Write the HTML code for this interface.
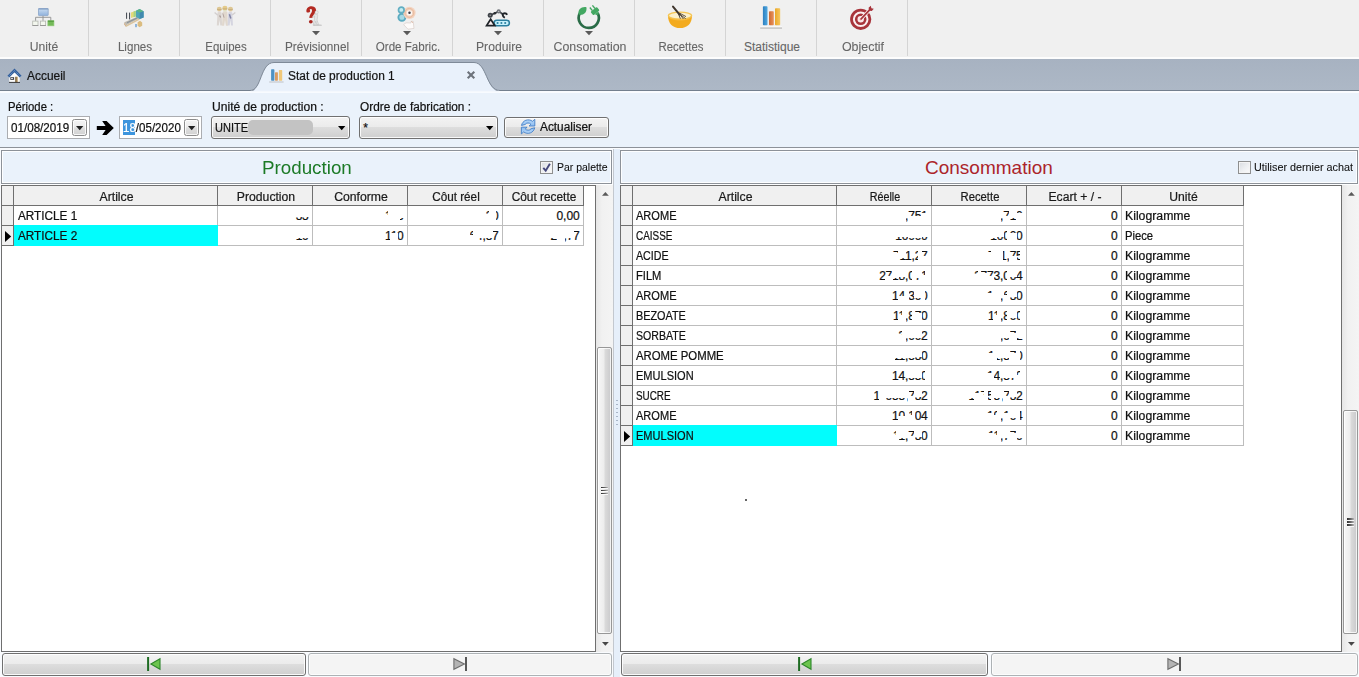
<!DOCTYPE html>
<html><head><meta charset="utf-8"><title>Stat de production</title>
<style>
html,body{margin:0;padding:0;}
body{width:1359px;height:677px;overflow:hidden;position:relative;background:#eaf2fb;font-family:"Liberation Sans",sans-serif;}
.b{position:absolute;box-sizing:border-box;}
.t{position:absolute;white-space:nowrap;-webkit-text-stroke:0.22px currentColor;}
svg{position:absolute;overflow:visible;}
.btn{position:absolute;box-sizing:border-box;border:1px solid #707070;border-radius:3px;
 background:linear-gradient(#f3f3f3 0%,#ebebeb 48%,#dddddd 50%,#cfcfcf 100%);box-shadow:inset 0 0 0 1px rgba(255,255,255,.85);}
.btnd{position:absolute;box-sizing:border-box;border:1px solid #adb2b5;border-radius:3px;background:#f4f4f4;box-shadow:inset 0 0 0 1px #fcfcfc;}
</style></head>
<body>
<div class="b" style="left:0px;top:0px;width:1359px;height:57px;background:#f0f0f0;"></div>
<div class="b" style="left:0px;top:57px;width:1359px;height:2px;background:#fdfdfd;"></div>
<div class="b" style="left:88px;top:0px;width:1px;height:56px;background:#d4d4d4;"></div>
<div class="b" style="left:179px;top:0px;width:1px;height:56px;background:#d4d4d4;"></div>
<div class="b" style="left:270px;top:0px;width:1px;height:56px;background:#d4d4d4;"></div>
<div class="b" style="left:361px;top:0px;width:1px;height:56px;background:#d4d4d4;"></div>
<div class="b" style="left:452px;top:0px;width:1px;height:56px;background:#d4d4d4;"></div>
<div class="b" style="left:543px;top:0px;width:1px;height:56px;background:#d4d4d4;"></div>
<div class="b" style="left:634px;top:0px;width:1px;height:56px;background:#d4d4d4;"></div>
<div class="b" style="left:725px;top:0px;width:1px;height:56px;background:#d4d4d4;"></div>
<div class="b" style="left:816px;top:0px;width:1px;height:56px;background:#d4d4d4;"></div>
<div class="b" style="left:907px;top:0px;width:1px;height:56px;background:#d4d4d4;"></div>
<div class="t" style="left:-16px;top:39.84px;font-size:12px;line-height:14px;color:#666;width:120px;text-align:center;transform:scaleX(1.0138);transform-origin:50% 0;-webkit-text-stroke:0.1px currentColor;">Unité</div>
<div class="t" style="left:75px;top:39.84px;font-size:12px;line-height:14px;color:#666;width:120px;text-align:center;transform:scaleX(0.9671);transform-origin:50% 0;-webkit-text-stroke:0.1px currentColor;">Lignes</div>
<div class="t" style="left:166px;top:39.84px;font-size:12px;line-height:14px;color:#666;width:120px;text-align:center;transform:scaleX(0.9546);transform-origin:50% 0;-webkit-text-stroke:0.1px currentColor;">Equipes</div>
<div class="t" style="left:257px;top:39.84px;font-size:12px;line-height:14px;color:#666;width:120px;text-align:center;transform:scaleX(0.9806);transform-origin:50% 0;-webkit-text-stroke:0.1px currentColor;">Prévisionnel</div>
<div class="t" style="left:348px;top:39.84px;font-size:12px;line-height:14px;color:#666;width:120px;text-align:center;transform:scaleX(0.9657);transform-origin:50% 0;-webkit-text-stroke:0.1px currentColor;">Orde Fabric.</div>
<div class="t" style="left:439px;top:39.84px;font-size:12px;line-height:14px;color:#666;width:120px;text-align:center;transform:scaleX(1.0141);transform-origin:50% 0;-webkit-text-stroke:0.1px currentColor;">Produire</div>
<div class="t" style="left:530px;top:39.84px;font-size:12px;line-height:14px;color:#666;width:120px;text-align:center;transform:scaleX(1.031);transform-origin:50% 0;-webkit-text-stroke:0.1px currentColor;">Consomation</div>
<div class="t" style="left:621px;top:39.84px;font-size:12px;line-height:14px;color:#666;width:120px;text-align:center;transform:scaleX(0.9503);transform-origin:50% 0;-webkit-text-stroke:0.1px currentColor;">Recettes</div>
<div class="t" style="left:712px;top:39.84px;font-size:12px;line-height:14px;color:#666;width:120px;text-align:center;-webkit-text-stroke:0.1px currentColor;">Statistique</div>
<div class="t" style="left:803px;top:39.84px;font-size:12px;line-height:14px;color:#666;width:120px;text-align:center;transform:scaleX(1.0349);transform-origin:50% 0;-webkit-text-stroke:0.1px currentColor;">Objectif</div>
<svg style="left:312px;top:30.8px" width="9" height="5" viewBox="0 0 9 5"><path d="M0 0H8L4 4.2Z" fill="#5a5a5a"/></svg>
<svg style="left:403px;top:30.8px" width="9" height="5" viewBox="0 0 9 5"><path d="M0 0H8L4 4.2Z" fill="#5a5a5a"/></svg>
<svg style="left:494px;top:30.8px" width="9" height="5" viewBox="0 0 9 5"><path d="M0 0H8L4 4.2Z" fill="#5a5a5a"/></svg>
<svg style="left:585px;top:30.8px" width="9" height="5" viewBox="0 0 9 5"><path d="M0 0H8L4 4.2Z" fill="#5a5a5a"/></svg>
<svg style="left:24px;top:0px" width="40" height="40" viewBox="0 0 40 40" ><defs><linearGradient id="gU" x1="0" y1="0" x2="0" y2="1"><stop offset="0" stop-color="#c9dcf1"/><stop offset="1" stop-color="#8fb1dc"/></linearGradient></defs><rect x="14.5" y="8.7" width="9.7" height="6.9" rx="0.7" fill="url(#gU)" stroke="#89a5c9" stroke-width="0.8"/><rect x="14.3" y="8.3" width="10.1" height="1.2" fill="#7f9bc2"/><path d="M19 15.9V20.8M11.6 20.8V17.3H26.8V20.8" fill="none" stroke="#8f8f8f" stroke-width="0.9"/><rect x="8.7" y="21.1" width="5.3" height="4.4" fill="#f3f7ee" stroke="#b4b8b0" stroke-width="0.8"/><rect x="8.4" y="25.2" width="5.9" height="0.8" fill="#8e8e8e"/><rect x="16.4" y="21.1" width="5.2" height="4.4" fill="#f3f7ee" stroke="#b4b8b0" stroke-width="0.8"/><rect x="16.1" y="25.2" width="5.8" height="0.8" fill="#8e8e8e"/><rect x="23.9" y="20.8" width="6" height="5" fill="#74ba58" stroke="#8cc874" stroke-width="0.7"/><rect x="23.9" y="20.6" width="6" height="1.1" fill="#4c9638"/></svg>
<svg style="left:114px;top:0px" width="40" height="40" viewBox="0 0 40 40" style="filter:blur(0.4px)"><g opacity="0.9"><path d="M10.3 22.3L23.8 16.4L25.6 18.2L12 25.2Z" fill="#b7b2a8"/><path d="M10.3 22.3L12 25.2L12 27L10.2 24.4Z" fill="#c9a57a"/><path d="M12 25.2L25.6 18.2V19.8L12 27Z" fill="#d8bf95"/><path d="M13 22.8L23 18" stroke="#7e8790" stroke-width="1.2"/><rect x="12" y="12.6" width="1.1" height="6.2" fill="#3a3f48"/><rect x="15" y="12.6" width="1.1" height="6.8" fill="#3a3f48"/><path d="M17 12.4L21.8 10.8V16.4L17 18Z" fill="#e3d86c"/><path d="M19.6 11.4L21.8 10.8V16.4L19.6 17.2Z" fill="#9ccf7c"/><path d="M22 10.8L25.6 9L29.6 11.2V17.4L25.6 19L22 17Z" fill="#3f9cb0"/><path d="M22 10.8L25.6 9L29.6 11.2L25.8 12.8Z" fill="#4cae7a"/><path d="M25.8 12.8L29.6 11.2V17.4L25.6 19Z" fill="#2f7fa8"/><path d="M23.6 22.2L26 20.8L28.2 22.4V25.8L25.6 27.2L23.6 25.8Z" fill="#d9b774"/><rect x="21.2" y="24" width="1.6" height="3.2" fill="#6f9fd0"/></g></svg>
<svg style="left:205px;top:0px" width="40" height="40" viewBox="0 0 40 40" style="filter:blur(0.5px)"><g opacity="0.88"><path d="M12.4 13C12.6 11.8 16.4 11.8 16.6 13L16.8 18.6L17.2 25.5H15.3L14.6 20L13.8 25.5H11.8L12.2 18.6Z" fill="#dad3ce"/><path d="M17.6 12.2C17.8 10.8 22.2 10.8 22.4 12.2L22.6 18.6L23 25.7H20.9L20 20L19.1 25.7H17L17.4 18.6Z" fill="#e0d5c9"/><path d="M23.2 13C23.4 11.8 27.2 11.8 27.4 13L27.6 18.6L28 25.5H26.1L25.4 20L24.6 25.5H22.6L23 18.6Z" fill="#d2d2de"/><path d="M9.6 12.4L12.8 15.2M30.4 12.4L27.2 15" stroke="#cfcaca" stroke-width="1.3"/><path d="M24.4 14.2L25.8 18.6" stroke="#70739a" stroke-width="1.5"/><path d="M14.6 15.4L15.6 17.6" stroke="#94847f" stroke-width="1.1"/><path d="M17.8 13.4L19 17.6" stroke="#a99a96" stroke-width="1"/><ellipse cx="14.3" cy="10.8" rx="1.7" ry="1.4" fill="#e6d9cc"/><ellipse cx="19.9" cy="10.2" rx="1.8" ry="1.5" fill="#dfe0c4"/><ellipse cx="25.5" cy="10.8" rx="1.7" ry="1.4" fill="#e6d9cc"/><ellipse cx="14.3" cy="8.9" rx="2.5" ry="2.1" fill="#dcc288"/><ellipse cx="19.9" cy="8" rx="2.6" ry="2.2" fill="#e3c57c"/><ellipse cx="25.5" cy="8.9" rx="2.5" ry="2.1" fill="#dcc288"/><path d="M12 9.7H16.6M17.4 8.9H22.4M23.2 9.7H27.8" stroke="#b99c62" stroke-width="0.8"/></g></svg>
<svg style="left:296px;top:0px" width="40" height="40" viewBox="0 0 40 40" style="filter:blur(0.3px)"><ellipse cx="21.4" cy="25.2" rx="4.6" ry="0.9" fill="#cdcdcd"/><path d="M10.4 11.4C10 7.6 13.4 6 15.8 6.2C19 6.4 20.4 8.6 20 10.8C19.6 13.2 16.8 14.6 16.4 17.8L13.4 18C13.2 14.6 16.2 12.6 16 10.4C15.8 8.8 14.2 8.8 13.6 9.8C14.6 10.6 14.2 12.6 12.4 12.6C11.2 12.6 10.5 12.2 10.4 11.4Z" fill="#b32a22"/><ellipse cx="14.8" cy="21.8" rx="1.9" ry="1.8" fill="#a8261f"/><path d="M19.8 14C21.4 13.6 22 15 21.6 16.6L21 20L22.6 24.6H20.8L19.8 21.2L18.8 24.8H17.2L18.4 19.6L18.6 16L17.2 17.2L16.6 16.4L18.8 14.4Z" fill="#e6e6e6" stroke="#b9b9b9" stroke-width="0.5"/><circle cx="20.6" cy="12.3" r="1.6" fill="#ededed" stroke="#bcbcbc" stroke-width="0.5"/></svg>
<svg style="left:387px;top:0px" width="40" height="40" viewBox="0 0 40 40" style="filter:blur(0.3px)"><circle cx="14.9" cy="17.3" r="3.5" fill="#a5d9e5" stroke="#5aaac0" stroke-width="1.9"/><circle cx="22.4" cy="12.9" r="6.2" fill="#f3d3bf"/><circle cx="22.4" cy="12.9" r="4.4" fill="none" stroke="#e8b99c" stroke-width="1"/><circle cx="22.4" cy="12.9" r="2.7" fill="#fdf8f5"/><circle cx="22.5" cy="12.8" r="1.25" fill="#3b3b45"/><circle cx="14.3" cy="9.9" r="2.8" fill="#c4ecf1" stroke="#62aec2" stroke-width="1.7"/><path d="M16.6 24.6L19 22.8L23.8 23L24 21.4L26.2 21.2L27 28.4L21 29.2Z" fill="#fdfbfa" stroke="#d8cdc8" stroke-width="0.7"/><path d="M24.4 21.6L25.8 22.6" stroke="#d9a78c" stroke-width="0.9"/></svg>
<svg style="left:478px;top:0px" width="40" height="40" viewBox="0 0 40 40" ><rect x="16" y="20.2" width="15.4" height="5.6" rx="2.8" fill="#c6f0fb" stroke="#2b7fa0" stroke-width="1.6"/><circle cx="19.6" cy="23" r="1.05" fill="#2b7fa0"/><circle cx="23.4" cy="23" r="1.05" fill="#2b7fa0"/><circle cx="27.2" cy="23" r="1.05" fill="#2b7fa0"/><path d="M12.7 19.2L16.8 25.6H8.6Z" fill="#fbeef0" stroke="#1f2328" stroke-width="1.7" stroke-linejoin="miter"/><path d="M12.2 15.2L20.7 11.4L25 14.2" fill="none" stroke="#3a3e44" stroke-width="1.7"/><circle cx="12.2" cy="15.2" r="2.5" fill="#3f4349"/><circle cx="12.2" cy="15.2" r="0.8" fill="#9a9a9a"/><circle cx="20.7" cy="11.4" r="2.1" fill="#6e7278"/><circle cx="20.7" cy="11.4" r="0.7" fill="#c8c8c8"/><circle cx="16.8" cy="13.3" r="1.3" fill="#2a2d31"/><path d="M29.2 14.8C28 12.6 25.4 12.8 24.6 14.6C24.8 16.4 25.8 17.2 26.8 17.8" fill="none" stroke="#1f2328" stroke-width="1.9"/></svg>
<svg style="left:569px;top:0px" width="40" height="40" viewBox="0 0 40 40" ><path d="M10.8 13.2A10.1 10.1 0 1 0 28.6 13" fill="none" stroke="#2a6c47" stroke-width="2.7"/><path d="M9.6 14.4C8.6 9.4 12.4 6.4 17.4 7.2C18.2 11.6 15.4 15 11.2 14.8Z" fill="#43a862"/><g transform="rotate(-40 25.6 10.6)"><rect x="21.6" y="9" width="8" height="4.6" rx="1" fill="#43a862"/><rect x="23.2" y="5.2" width="1.4" height="4" fill="#43a862"/><rect x="26.6" y="5.2" width="1.4" height="4" fill="#43a862"/><path d="M23.4 13.6H27.8L26.6 15.8H24.6Z" fill="#43a862"/></g></svg>
<svg style="left:660px;top:0px" width="40" height="40" viewBox="0 0 40 40" ><path d="M8 15.4C8 23.8 13 28 20 28C27 28 32 23.8 32 15.4Z" fill="#f3ab1f"/><ellipse cx="20" cy="15.6" rx="11.6" ry="3.5" fill="#fbf0cc" stroke="#f5c552" stroke-width="1.3"/><path d="M9.4 17.4C13 20 27 20 30.6 17.4C30 19 26 20.4 20 20.4C14 20.4 10.4 19 9.4 17.4Z" fill="#f7c04a" opacity="0.7"/><path d="M13 6.6L19.6 14.6" stroke="#3e352c" stroke-width="2" stroke-linecap="round"/><path d="M18.6 13.4L25.6 18.6M19 13.2L23.4 19M18.4 13.8L20.4 18.8M19.4 13L26 16.6" fill="none" stroke="#4a4036" stroke-width="0.9"/></svg>
<svg style="left:751px;top:0px" width="40" height="40" viewBox="0 0 40 40" ><defs><linearGradient id="gb1" x1="0" x2="1"><stop offset="0" stop-color="#2c7fc0"/><stop offset="1" stop-color="#4fa8e0"/></linearGradient><linearGradient id="gb2" x1="0" x2="1"><stop offset="0" stop-color="#cf6a33"/><stop offset="1" stop-color="#e9935a"/></linearGradient><linearGradient id="gb3" x1="0" x2="1"><stop offset="0" stop-color="#eaa828"/><stop offset="1" stop-color="#f6c860"/></linearGradient></defs><rect x="11.9" y="6.2" width="4.6" height="19" rx="0.8" fill="url(#gb1)"/><rect x="18" y="11.2" width="4.8" height="14" rx="0.8" fill="url(#gb2)"/><rect x="24" y="8.2" width="5.2" height="17" rx="0.8" fill="url(#gb3)"/><rect x="9.4" y="26.2" width="21.6" height="1.4" fill="#fbfbfb"/><rect x="9.2" y="27.6" width="21.8" height="0.9" fill="#a6a6a6"/></svg>
<svg style="left:842px;top:0px" width="40" height="40" viewBox="0 0 40 40" ><circle cx="18.7" cy="19.3" r="9.2" fill="#fbeff0" stroke="#a8343b" stroke-width="2.8"/><circle cx="18.7" cy="19.3" r="4.5" fill="#fbe9ea" stroke="#a8343b" stroke-width="2.6"/><circle cx="18.7" cy="19.3" r="1" fill="#d9838a"/><path d="M18.7 19.3L28.6 8.8" stroke="#fbeff0" stroke-width="3.4"/><path d="M18.7 19.3L28.6 8.8" stroke="#a8343b" stroke-width="1.7"/><path d="M27 10.6L26.6 7.8L28.8 5.8L29.4 8.2L31.8 8.8L29.8 11Z" fill="#a8343b"/></svg>
<div class="b" style="left:0px;top:59px;width:1359px;height:31px;background:linear-gradient(#a7b2c1,#adb8c6);"></div>
<div class="b" style="left:0px;top:90px;width:1359px;height:1px;background:#74808e;"></div>
<div class="b" style="left:0px;top:91px;width:1359px;height:2px;background:#fafcff;"></div>
<svg style="left:0;top:59px" width="1359" height="34" viewBox="0 59 1359 34"><path d="M250 91.5 C262 91.5 260 62.5 274 62.5 H474 C487 62.5 486 91.5 500 91.5 Z" fill="#e9f1fb"/><path d="M250 90.5 C262 90.5 260 62.5 274 62.5 H474 C487 62.5 486 90.5 500 90.5" fill="none" stroke="#7f8a98" stroke-width="1"/><path d="M251 91.5H499" stroke="#f4f8fd" stroke-width="1.6"/></svg>
<div class="t" style="left:27px;top:68.54px;font-size:12px;line-height:14px;color:#151515;transform:scaleX(0.9952);transform-origin:0 0;">Accueil</div>
<div class="t" style="left:288px;top:68.54px;font-size:12px;line-height:14px;color:#151515;transform:scaleX(0.9934);transform-origin:0 0;">Stat de production 1</div>
<svg style="left:467px;top:71px" width="9" height="9" viewBox="0 0 9 9"><path d="M0.7 0.7L7.3 7.3M7.3 0.7L0.7 7.3" stroke="#6d737b" stroke-width="2.1"/></svg>
<svg style="left:7px;top:68px" width="16" height="16" viewBox="7 68 16 16"><path d="M9.3 76L14.5 72.4L19.7 76V82.2H9.3Z" fill="#fbfbfb"/><path d="M8.4 76.6L14.5 70.4L20.6 76.6" fill="none" stroke="#335f9c" stroke-width="2.7" stroke-linejoin="miter"/><path d="M8.6 76.4L14.5 70.6L20.4 76.4" fill="none" stroke="#7fa9d8" stroke-width="0.9" stroke-dasharray="1 1"/><rect x="10.3" y="77.2" width="3.8" height="2.6" fill="#34373e"/><rect x="10.9" y="77.9" width="2.2" height="1" fill="#e4e4ea"/><rect x="15.4" y="76.8" width="2.3" height="5.4" fill="#b9965e"/><rect x="15.4" y="76.8" width="1" height="5.4" fill="#6d5b3a"/><rect x="9" y="81.9" width="11" height="0.9" fill="#2a2a2a"/></svg>
<svg style="left:268px;top:68px" width="17" height="16" viewBox="268 68 17 16"><rect x="271.1" y="69.3" width="3.3" height="11.4" rx="0.6" fill="#4d92c4"/><rect x="275" y="72.2" width="2.9" height="8.5" rx="0.6" fill="#d99b62"/><rect x="278.9" y="70.1" width="3.3" height="10.6" rx="0.6" fill="#f0c87a"/><rect x="269.2" y="81.6" width="14.4" height="0.8" fill="#b3b6ba"/></svg>
<div class="t" style="left:7.5px;top:100.24px;font-size:12px;line-height:14px;color:#111;transform:scaleX(0.9411);transform-origin:0 0;">Période :</div>
<div class="t" style="left:212.4px;top:100.24px;font-size:12px;line-height:14px;color:#111;transform:scaleX(1.0078);transform-origin:0 0;">Unité de production :</div>
<div class="t" style="left:359.7px;top:100.24px;font-size:12px;line-height:14px;color:#111;transform:scaleX(0.9847);transform-origin:0 0;">Ordre de fabrication :</div>
<div class="b" style="left:7px;top:116px;width:83px;height:23px;background:#fff;border:1px solid #abadb1;"></div>
<div class="t" style="left:10.5px;top:121.14px;font-size:12px;line-height:14px;color:#111;transform:scaleX(0.969);transform-origin:0 0;">01/08/2019</div>
<div class="b" style="left:119px;top:116px;width:83px;height:23px;background:#fff;border:1px solid #abadb1;"></div>
<div class="b" style="left:123px;top:120px;width:12px;height:15px;background:#3d95dd;"></div>
<div class="t" style="left:123.2px;top:121.14px;font-size:12px;line-height:14px;color:#111;transform:scaleX(0.9624);transform-origin:0 0;"><span style="color:#fff">18</span>/05/2020</div>
<div class="b" style="left:72px;top:119.3px;width:15px;height:16.6px;border:1px solid #8c8c8c;border-radius:2.5px;background:linear-gradient(#f4f4f4 0%,#ececec 48%,#dedede 52%,#d2d2d2 100%);box-shadow:inset 0 0 0 1px rgba(255,255,255,.8)"></div>
<svg style="left:76px;top:126px" width="8" height="5" viewBox="0 0 8 5"><path d="M0 0H7.4L3.7 4.2Z" fill="#222"/></svg>
<div class="b" style="left:184px;top:119.3px;width:15px;height:16.6px;border:1px solid #8c8c8c;border-radius:2.5px;background:linear-gradient(#f4f4f4 0%,#ececec 48%,#dedede 52%,#d2d2d2 100%);box-shadow:inset 0 0 0 1px rgba(255,255,255,.8)"></div>
<svg style="left:188px;top:126px" width="8" height="5" viewBox="0 0 8 5"><path d="M0 0H7.4L3.7 4.2Z" fill="#222"/></svg>
<svg style="left:96px;top:120px" width="19" height="16" viewBox="0 0 19 16"><path d="M0.8 5.9H9.6L6.2 1H10.6L17.8 8L10.6 15H6.2L9.6 10.1H0.8Z" fill="#000"/></svg>
<div class="btn" style="left:211px;top:116px;width:139px;height:23px"></div>
<div class="btn" style="left:359px;top:116px;width:139px;height:23px"></div>
<div class="t" style="left:215.3px;top:121.14px;font-size:12px;line-height:14px;color:#111;transform:scaleX(0.9166);transform-origin:0 0;">UNITE</div>
<div class="b" style="left:248px;top:119.5px;width:65px;height:15px;background:#c3c3c3;border-radius:5px;filter:blur(0.6px);"></div>
<div class="t" style="left:363.3px;top:121.34px;font-size:12px;line-height:14px;color:#111;">*</div>
<svg style="left:338px;top:126px" width="8" height="5" viewBox="0 0 8 5"><path d="M0 0H7.4L3.7 4.3Z" fill="#000"/></svg>
<svg style="left:486px;top:126px" width="8" height="5" viewBox="0 0 8 5"><path d="M0 0H7.4L3.7 4.3Z" fill="#000"/></svg>
<div class="btn" style="left:504px;top:117px;width:105px;height:21px"></div>
<div class="t" style="left:540px;top:120.24px;font-size:12px;line-height:14px;color:#111;transform:scaleX(0.9869);transform-origin:0 0;">Actualiser</div>
<svg style="left:520.6px;top:119.1px" width="14.4" height="15.4" viewBox="0 0 15 16"><defs><linearGradient id="gR" x1="0" y1="0" x2="0" y2="1"><stop offset="0" stop-color="#b9d9f9"/><stop offset="1" stop-color="#8cbcf0"/></linearGradient></defs><path d="M0.5 6.7A7.2 7.2 0 0 1 12 2.4L14.4 0.3V7.3H8.4L10.3 5.5A3.8 3.8 0 0 0 4.3 5.7Z" fill="url(#gR)" stroke="#3f7cc6" stroke-width="0.9" stroke-linejoin="round"/><path d="M0.5 6.7A7.2 7.2 0 0 1 12 2.4L14.4 0.3V7.3H8.4L10.3 5.5A3.8 3.8 0 0 0 4.3 5.7Z" transform="rotate(180 7.4 7.9)" fill="url(#gR)" stroke="#3f7cc6" stroke-width="0.9" stroke-linejoin="round"/></svg>
<div class="b" style="left:0px;top:147px;width:1359px;height:1px;background:#8d9299;"></div>
<div class="b" style="left:0px;top:148px;width:1359px;height:2px;background:#fbfdff;"></div>
<div class="b" style="left:0px;top:148px;width:613px;height:529px;background:#f9fbfe;"></div>
<div class="b" style="left:620px;top:148px;width:739px;height:529px;background:#f9fbfe;"></div>
<div class="b" style="left:613px;top:149px;width:1px;height:528px;background:#c3c8cf;"></div>
<div class="b" style="left:614px;top:149px;width:6px;height:528px;background:#e6effa;"></div>
<div class="b" style="left:616.3px;top:399.5px;width:1.6px;height:1.8px;background:#a9b6c8;"></div>
<div class="b" style="left:616.3px;top:403.5px;width:1.6px;height:1.8px;background:#a9b6c8;"></div>
<div class="b" style="left:616.3px;top:407.5px;width:1.6px;height:1.8px;background:#a9b6c8;"></div>
<div class="b" style="left:616.3px;top:411.5px;width:1.6px;height:1.8px;background:#a9b6c8;"></div>
<div class="b" style="left:616.3px;top:415.5px;width:1.6px;height:1.8px;background:#a9b6c8;"></div>
<div class="b" style="left:616.3px;top:419.5px;width:1.6px;height:1.8px;background:#a9b6c8;"></div>
<div class="b" style="left:616.3px;top:423.5px;width:1.6px;height:1.8px;background:#a9b6c8;"></div>
<div class="b" style="left:1px;top:150px;width:611px;height:34px;border:1px solid #8d9299;background:#eaf2fb;box-shadow:inset 0 0 0 1px #fdfeff;"></div>
<div class="b" style="left:620px;top:150px;width:738px;height:34px;border:1px solid #8d9299;background:#eaf2fb;box-shadow:inset 0 0 0 1px #fdfeff;"></div>
<div class="b" style="left:1px;top:184px;width:612px;height:1px;background:#fdfeff;"></div>
<div class="b" style="left:620px;top:184px;width:738px;height:1px;background:#fdfeff;"></div>
<div class="t" style="left:261.7px;top:156.52px;font-size:19px;line-height:21px;color:#1c7a26;transform:scaleX(0.9886);transform-origin:0 0;-webkit-text-stroke:0;">Production</div>
<div class="t" style="left:925px;top:156.52px;font-size:19px;line-height:21px;color:#ac242a;-webkit-text-stroke:0;">Consommation</div>
<div class="b" style="left:540px;top:161px;width:13px;height:13px;border:1px solid #8e8f8f;background:linear-gradient(135deg,#d9dce0 0%,#eef0f2 55%,#fbfbfb 100%);box-shadow:inset 0 0 0 1px #f4f4f4;"></div><svg style="left:540px;top:161px" width="13" height="13" viewBox="0 0 13 13"><path d="M3.3 6.9L5.7 9.7L9.9 2.7" fill="none" stroke="#46487c" stroke-width="1.9"/></svg>
<div class="t" style="left:557px;top:160.63px;font-size:10.6px;line-height:12.6px;color:#111;transform:scaleX(0.987);transform-origin:0 0;-webkit-text-stroke:0.08px currentColor;">Par palette</div>
<div class="b" style="left:1238px;top:161px;width:13px;height:13px;border:1px solid #8e8f8f;background:linear-gradient(135deg,#d9dce0 0%,#eef0f2 55%,#fbfbfb 100%);box-shadow:inset 0 0 0 1px #f4f4f4;"></div>
<div class="t" style="left:1254.3px;top:160.63px;font-size:10.6px;line-height:12.6px;color:#111;transform:scaleX(1.0194);transform-origin:0 0;-webkit-text-stroke:0.08px currentColor;">Utiliser dernier achat</div>
<div class="b" style="left:1px;top:185px;width:595px;height:467px;border:1px solid #6f6f6f;background:#fff;"></div><div class="b" style="left:2px;top:186px;width:582px;height:19px;background:#f0f0f0;"></div><div class="b" style="left:2px;top:186px;width:11px;height:60px;background:#f0f0f0;"></div><div class="b" style="left:2px;top:205px;width:582px;height:1px;background:#6f6f6f;"></div><div class="b" style="left:13px;top:186px;width:1px;height:60px;background:#6f6f6f;"></div><div class="b" style="left:217px;top:186px;width:1px;height:20px;background:#6f6f6f;"></div><div class="b" style="left:217px;top:206px;width:1px;height:40px;background:#bdbdbd;"></div><div class="b" style="left:312px;top:186px;width:1px;height:20px;background:#6f6f6f;"></div><div class="b" style="left:312px;top:206px;width:1px;height:40px;background:#bdbdbd;"></div><div class="b" style="left:407px;top:186px;width:1px;height:20px;background:#6f6f6f;"></div><div class="b" style="left:407px;top:206px;width:1px;height:40px;background:#bdbdbd;"></div><div class="b" style="left:502px;top:186px;width:1px;height:20px;background:#6f6f6f;"></div><div class="b" style="left:502px;top:206px;width:1px;height:40px;background:#bdbdbd;"></div><div class="b" style="left:583px;top:186px;width:1px;height:20px;background:#6f6f6f;"></div><div class="b" style="left:583px;top:206px;width:1px;height:40px;background:#bdbdbd;"></div><div class="b" style="left:2px;top:225px;width:11px;height:1px;background:#6f6f6f;"></div><div class="b" style="left:14px;top:225px;width:570px;height:1px;background:#bdbdbd;"></div><div class="b" style="left:2px;top:245px;width:11px;height:1px;background:#6f6f6f;"></div><div class="b" style="left:14px;top:245px;width:570px;height:1px;background:#bdbdbd;"></div><div class="t" style="left:14.5px;top:190.24px;font-size:12px;line-height:14px;color:#1a1a1a;width:203px;text-align:center;transform:scaleX(1.0198);transform-origin:50% 0;">Artilce</div><div class="t" style="left:218.5px;top:190.24px;font-size:12px;line-height:14px;color:#1a1a1a;width:94px;text-align:center;transform:scaleX(1.0162);transform-origin:50% 0;">Production</div><div class="t" style="left:313.5px;top:190.24px;font-size:12px;line-height:14px;color:#1a1a1a;width:94px;text-align:center;transform:scaleX(1.0173);transform-origin:50% 0;">Conforme</div><div class="t" style="left:408.5px;top:190.24px;font-size:12px;line-height:14px;color:#1a1a1a;width:94px;text-align:center;transform:scaleX(0.9755);transform-origin:50% 0;">Côut réel</div><div class="t" style="left:503.5px;top:190.24px;font-size:12px;line-height:14px;color:#1a1a1a;width:80px;text-align:center;transform:scaleX(0.9882);transform-origin:50% 0;">Côut recette</div><div class="t" style="left:18.2px;top:209.24px;font-size:12px;line-height:14px;color:#111;transform:scaleX(0.979);transform-origin:0 0;">ARTICLE 1</div><div class="t" style="left:217.8px;top:209.24px;font-size:12px;line-height:14px;color:#111;width:90.8px;text-align:right;letter-spacing:-0.2px;">55</div><div class="b" style="left:301.92593750000003px;top:208px;width:7.274062499999999px;height:8.6px;background:#fff;"></div><div class="b" style="left:295.45187500000003px;top:208px;width:7.274062499999999px;height:8.6px;background:#fff;"></div><div class="t" style="left:312.8px;top:209.24px;font-size:12px;line-height:14px;color:#111;width:90.8px;text-align:right;letter-spacing:-0.2px;">115</div><div class="b" style="left:396.92593750000003px;top:208px;width:7.274062499999999px;height:9.5px;background:#fff;"></div><div class="b" style="left:396.92593750000003px;top:208px;width:3.560734375px;height:16.5px;background:#fff;"></div><div class="b" style="left:390.45187500000003px;top:208px;width:7.274062499999999px;height:16.5px;background:#fff;"></div><div class="b" style="left:383.9778125px;top:214.5px;width:7.274062499999999px;height:10px;background:#fff;"></div><div class="b" style="left:387.938546875px;top:208px;width:3.23703125px;height:16.5px;background:#fff;"></div><div class="t" style="left:407.8px;top:209.24px;font-size:12px;line-height:14px;color:#111;width:90.8px;text-align:right;letter-spacing:-0.2px;">20</div><div class="b" style="left:491.92593750000003px;top:208px;width:3.6370312499999997px;height:16.5px;background:#fff;"></div><div class="b" style="left:485.45187500000003px;top:214.5px;width:7.274062499999999px;height:10px;background:#fff;"></div><div class="b" style="left:489.412609375px;top:208px;width:3.23703125px;height:16.5px;background:#fff;"></div><div class="t" style="left:503px;top:209.24px;font-size:12px;line-height:14px;color:#111;width:76.8px;text-align:right;">0,00</div><div class="b" style="left:14px;top:225px;width:204px;height:21px;background:#02fdfd;"></div><svg style="left:4.7px;top:230.9px" width="7" height="12" viewBox="0 0 7 12"><path d="M0 0L6.2 5.5L0 11Z" fill="#000"/></svg><div class="t" style="left:18.2px;top:229.24px;font-size:12px;line-height:14px;color:#111;transform:scaleX(0.979);transform-origin:0 0;">ARTICLE 2</div><div class="t" style="left:217.8px;top:229.24px;font-size:12px;line-height:14px;color:#111;width:90.8px;text-align:right;letter-spacing:-0.2px;">10</div><div class="b" style="left:301.92593750000003px;top:228px;width:7.274062499999999px;height:10.2px;background:#fff;"></div><div class="b" style="left:295.45187500000003px;top:228px;width:7.274062499999999px;height:10.2px;background:#fff;"></div><div class="t" style="left:312.8px;top:229.24px;font-size:12px;line-height:14px;color:#111;width:90.8px;text-align:right;letter-spacing:-0.2px;">110</div><div class="b" style="left:390.45187500000003px;top:233.4px;width:7.274062499999999px;height:11px;background:#fff;"></div><div class="t" style="left:407.8px;top:229.24px;font-size:12px;line-height:14px;color:#111;width:90.8px;text-align:right;letter-spacing:-0.2px;">164,57</div><div class="b" style="left:485.45187500000003px;top:228px;width:7.274062499999999px;height:10.2px;background:#fff;"></div><div class="b" style="left:475.8440625px;top:228px;width:7.274062499999999px;height:9.5px;background:#fff;"></div><div class="b" style="left:475.8440625px;top:228px;width:3.560734375px;height:16.5px;background:#fff;"></div><div class="b" style="left:469.37px;top:234.5px;width:7.274062499999999px;height:10px;background:#fff;"></div><div class="b" style="left:473.33073437499996px;top:228px;width:3.23703125px;height:16.5px;background:#fff;"></div><div class="b" style="left:462.8959375px;top:228px;width:7.274062499999999px;height:16.5px;background:#fff;"></div><div class="t" style="left:502.8px;top:229.24px;font-size:12px;line-height:14px;color:#111;width:76.8px;text-align:right;letter-spacing:-0.2px;">24,77</div><div class="b" style="left:566.4518750000001px;top:228px;width:7.274062499999999px;height:10.2px;background:#fff;"></div><div class="b" style="left:563.3181250000001px;top:228px;width:3.93375px;height:9.5px;background:#fff;"></div><div class="b" style="left:563.3181250000001px;top:228px;width:1.7235625px;height:16.5px;background:#fff;"></div><div class="b" style="left:556.8440625000002px;top:228px;width:7.274062499999999px;height:16.5px;background:#fff;"></div><div class="b" style="left:550.3700000000002px;top:228px;width:7.274062499999999px;height:10.2px;background:#fff;"></div>
<div class="b" style="left:596px;top:185px;width:17px;height:467px;background:linear-gradient(90deg,#e6e6e6 0%,#f1f1f1 35%,#f4f4f4 100%);"></div><svg style="left:602px;top:192.2px" width="8" height="5" viewBox="0 0 8 5"><path d="M0 3.7H6.8L3.4 0Z" fill="#5a5a5a"/></svg><svg style="left:602px;top:642.2px" width="8" height="5" viewBox="0 0 8 5"><path d="M0 0H6.8L3.4 3.7Z" fill="#484848"/></svg><div class="b" style="left:597px;top:346.5px;width:15px;height:287.0px;border:1px solid #979797;border-radius:2px;background:linear-gradient(90deg,#f6f6f6 0%,#ededed 45%,#dadada 55%,#c9c9cb 100%);box-shadow:inset 0 0 0 1px rgba(255,255,255,.75);"></div><div class="b" style="left:601px;top:486.7px;width:6.8px;height:1.3px;background:linear-gradient(90deg,#2e2e2e,#6a6a6a 55%,#b8b8b8);"></div><div class="b" style="left:601px;top:488.0px;width:6.8px;height:1px;background:rgba(255,255,255,.8);"></div><div class="b" style="left:601px;top:489.7px;width:6.8px;height:1.3px;background:linear-gradient(90deg,#2e2e2e,#6a6a6a 55%,#b8b8b8);"></div><div class="b" style="left:601px;top:491.0px;width:6.8px;height:1px;background:rgba(255,255,255,.8);"></div><div class="b" style="left:601px;top:492.7px;width:6.8px;height:1.3px;background:linear-gradient(90deg,#2e2e2e,#6a6a6a 55%,#b8b8b8);"></div><div class="b" style="left:601px;top:494.0px;width:6.8px;height:1px;background:rgba(255,255,255,.8);"></div>
<div class="btn" style="left:2px;top:653px;width:304px;height:23px"></div><div class="btnd" style="left:308px;top:653px;width:304px;height:23px"></div><svg style="left:147px;top:657px" width="15" height="14" viewBox="0 0 15 14"><path d="M1.1 0V14" stroke="#1e6b22" stroke-width="2"/><path d="M13 1.7V12.3L3.9 7Z" fill="#6cc44e" stroke="#2d862b" stroke-width="1.1" stroke-linejoin="miter"/></svg><svg style="left:452.5px;top:657px" width="15" height="14" viewBox="0 0 15 14"><path d="M13 0V14" stroke="#585858" stroke-width="2"/><path d="M0.9 1.7V12.3L11.4 7Z" fill="#b4b4b4" stroke="#6e6e6e" stroke-width="1.1"/></svg>
<div class="b" style="left:620px;top:185px;width:722px;height:467px;border:1px solid #6f6f6f;background:#fff;"></div><div class="b" style="left:621px;top:186px;width:623px;height:19px;background:#f0f0f0;"></div><div class="b" style="left:621px;top:186px;width:11px;height:260px;background:#f0f0f0;"></div><div class="b" style="left:621px;top:205px;width:623px;height:1px;background:#6f6f6f;"></div><div class="b" style="left:632px;top:186px;width:1px;height:260px;background:#6f6f6f;"></div><div class="b" style="left:836px;top:186px;width:1px;height:20px;background:#6f6f6f;"></div><div class="b" style="left:836px;top:206px;width:1px;height:240px;background:#bdbdbd;"></div><div class="b" style="left:931px;top:186px;width:1px;height:20px;background:#6f6f6f;"></div><div class="b" style="left:931px;top:206px;width:1px;height:240px;background:#bdbdbd;"></div><div class="b" style="left:1026px;top:186px;width:1px;height:20px;background:#6f6f6f;"></div><div class="b" style="left:1026px;top:206px;width:1px;height:240px;background:#bdbdbd;"></div><div class="b" style="left:1121px;top:186px;width:1px;height:20px;background:#6f6f6f;"></div><div class="b" style="left:1121px;top:206px;width:1px;height:240px;background:#bdbdbd;"></div><div class="b" style="left:1243px;top:186px;width:1px;height:20px;background:#6f6f6f;"></div><div class="b" style="left:1243px;top:206px;width:1px;height:240px;background:#bdbdbd;"></div><div class="b" style="left:621px;top:225px;width:11px;height:1px;background:#6f6f6f;"></div><div class="b" style="left:633px;top:225px;width:611px;height:1px;background:#bdbdbd;"></div><div class="b" style="left:621px;top:245px;width:11px;height:1px;background:#6f6f6f;"></div><div class="b" style="left:633px;top:245px;width:611px;height:1px;background:#bdbdbd;"></div><div class="b" style="left:621px;top:265px;width:11px;height:1px;background:#6f6f6f;"></div><div class="b" style="left:633px;top:265px;width:611px;height:1px;background:#bdbdbd;"></div><div class="b" style="left:621px;top:285px;width:11px;height:1px;background:#6f6f6f;"></div><div class="b" style="left:633px;top:285px;width:611px;height:1px;background:#bdbdbd;"></div><div class="b" style="left:621px;top:305px;width:11px;height:1px;background:#6f6f6f;"></div><div class="b" style="left:633px;top:305px;width:611px;height:1px;background:#bdbdbd;"></div><div class="b" style="left:621px;top:325px;width:11px;height:1px;background:#6f6f6f;"></div><div class="b" style="left:633px;top:325px;width:611px;height:1px;background:#bdbdbd;"></div><div class="b" style="left:621px;top:345px;width:11px;height:1px;background:#6f6f6f;"></div><div class="b" style="left:633px;top:345px;width:611px;height:1px;background:#bdbdbd;"></div><div class="b" style="left:621px;top:365px;width:11px;height:1px;background:#6f6f6f;"></div><div class="b" style="left:633px;top:365px;width:611px;height:1px;background:#bdbdbd;"></div><div class="b" style="left:621px;top:385px;width:11px;height:1px;background:#6f6f6f;"></div><div class="b" style="left:633px;top:385px;width:611px;height:1px;background:#bdbdbd;"></div><div class="b" style="left:621px;top:405px;width:11px;height:1px;background:#6f6f6f;"></div><div class="b" style="left:633px;top:405px;width:611px;height:1px;background:#bdbdbd;"></div><div class="b" style="left:621px;top:425px;width:11px;height:1px;background:#6f6f6f;"></div><div class="b" style="left:633px;top:425px;width:611px;height:1px;background:#bdbdbd;"></div><div class="b" style="left:621px;top:445px;width:11px;height:1px;background:#6f6f6f;"></div><div class="b" style="left:633px;top:445px;width:611px;height:1px;background:#bdbdbd;"></div><div class="t" style="left:633.5px;top:190.24px;font-size:12px;line-height:14px;color:#1a1a1a;width:203px;text-align:center;transform:scaleX(1.0198);transform-origin:50% 0;">Artilce</div><div class="t" style="left:837.5px;top:190.24px;font-size:12px;line-height:14px;color:#1a1a1a;width:94px;text-align:center;transform:scaleX(0.8965);transform-origin:50% 0;">Réelle</div><div class="t" style="left:932.5px;top:190.24px;font-size:12px;line-height:14px;color:#1a1a1a;width:94px;text-align:center;transform:scaleX(0.9382);transform-origin:50% 0;">Recette</div><div class="t" style="left:1027.5px;top:190.24px;font-size:12px;line-height:14px;color:#1a1a1a;width:94px;text-align:center;transform:scaleX(1.0125);transform-origin:50% 0;">Ecart + / -</div><div class="t" style="left:1122.5px;top:190.24px;font-size:12px;line-height:14px;color:#1a1a1a;width:121px;text-align:center;transform:scaleX(1.0138);transform-origin:50% 0;">Unité</div><div class="t" style="left:636.2px;top:209.24px;font-size:12px;line-height:14px;color:#111;transform:scaleX(0.9203);transform-origin:0 0;">AROME</div><div class="t" style="left:836.8px;top:209.24px;font-size:12px;line-height:14px;color:#111;width:90.8px;text-align:right;letter-spacing:-0.2px;">4,751</div><div class="b" style="left:920.9259375px;top:213.4px;width:7.274062499999999px;height:11px;background:#fff;"></div><div class="b" style="left:914.4518750000001px;top:215.6px;width:7.274062499999999px;height:9px;background:#fff;"></div><div class="b" style="left:907.9778125000001px;top:215.6px;width:7.274062499999999px;height:9px;background:#fff;"></div><div class="b" style="left:898.3700000000002px;top:208px;width:7.274062499999999px;height:16.5px;background:#fff;"></div><div class="t" style="left:931.8px;top:209.24px;font-size:12px;line-height:14px;color:#111;width:90.8px;text-align:right;letter-spacing:-0.2px;">4,710</div><div class="b" style="left:1015.9259375px;top:213.4px;width:7.274062499999999px;height:11px;background:#fff;"></div><div class="b" style="left:1009.4518750000001px;top:208px;width:7.274062499999999px;height:10.2px;background:#fff;"></div><div class="b" style="left:1002.9778125000001px;top:215.6px;width:7.274062499999999px;height:9px;background:#fff;"></div><div class="b" style="left:993.3700000000002px;top:208px;width:7.274062499999999px;height:16.5px;background:#fff;"></div><div class="t" style="left:1027px;top:209.24px;font-size:12px;line-height:14px;color:#111;width:90.8px;text-align:right;">0</div><div class="t" style="left:1124.7px;top:209.24px;font-size:12px;line-height:14px;color:#111;transform:scaleX(1.0215);transform-origin:0 0;">Kilogramme</div><div class="t" style="left:636.2px;top:229.24px;font-size:12px;line-height:14px;color:#111;transform:scaleX(0.8269);transform-origin:0 0;">CAISSE</div><div class="t" style="left:836.8px;top:229.24px;font-size:12px;line-height:14px;color:#111;width:90.8px;text-align:right;letter-spacing:-0.2px;">10000</div><div class="b" style="left:920.9259375px;top:228px;width:7.274062499999999px;height:8.6px;background:#fff;"></div><div class="b" style="left:914.4518750000001px;top:228px;width:7.274062499999999px;height:10.2px;background:#fff;"></div><div class="b" style="left:907.9778125000001px;top:228px;width:7.274062499999999px;height:10.2px;background:#fff;"></div><div class="b" style="left:901.5037500000002px;top:228px;width:7.274062499999999px;height:8.6px;background:#fff;"></div><div class="b" style="left:895.0296875000003px;top:228px;width:7.274062499999999px;height:8.6px;background:#fff;"></div><div class="t" style="left:931.8px;top:229.24px;font-size:12px;line-height:14px;color:#111;width:90.8px;text-align:right;letter-spacing:-0.2px;">10000</div><div class="b" style="left:1009.4518750000001px;top:233.4px;width:7.274062499999999px;height:11px;background:#fff;"></div><div class="b" style="left:1006.6148437500001px;top:228px;width:3.6370312499999997px;height:16.5px;background:#fff;"></div><div class="b" style="left:996.5037500000002px;top:228px;width:7.274062499999999px;height:8.6px;background:#fff;"></div><div class="b" style="left:990.0296875000003px;top:228px;width:7.274062499999999px;height:10.2px;background:#fff;"></div><div class="t" style="left:1027px;top:229.24px;font-size:12px;line-height:14px;color:#111;width:90.8px;text-align:right;">0</div><div class="t" style="left:1124.7px;top:229.24px;font-size:12px;line-height:14px;color:#111;transform:scaleX(0.9361);transform-origin:0 0;">Piece</div><div class="t" style="left:636.2px;top:249.24px;font-size:12px;line-height:14px;color:#111;transform:scaleX(0.8889);transform-origin:0 0;">ACIDE</div><div class="t" style="left:836.8px;top:249.24px;font-size:12px;line-height:14px;color:#111;width:90.8px;text-align:right;letter-spacing:-0.2px;">711,27</div><div class="b" style="left:920.9259375px;top:255.6px;width:7.274062499999999px;height:9px;background:#fff;"></div><div class="b" style="left:918.08890625px;top:248px;width:3.6370312499999997px;height:16.5px;background:#fff;"></div><div class="b" style="left:898.3700000000002px;top:248px;width:7.274062499999999px;height:10.2px;background:#fff;"></div><div class="b" style="left:891.8959375000003px;top:253.4px;width:7.274062499999999px;height:11px;background:#fff;"></div><div class="t" style="left:931.8px;top:249.24px;font-size:12px;line-height:14px;color:#111;width:90.8px;text-align:right;letter-spacing:-0.2px;">711,75</div><div class="b" style="left:1019.56296875px;top:248px;width:3.6370312499999997px;height:16.5px;background:#fff;"></div><div class="b" style="left:1009.4518750000001px;top:255.6px;width:7.274062499999999px;height:9px;background:#fff;"></div><div class="b" style="left:999.8440625000002px;top:248px;width:3.6370312499999997px;height:16.5px;background:#fff;"></div><div class="b" style="left:993.3700000000002px;top:248px;width:7.274062499999999px;height:16.5px;background:#fff;"></div><div class="b" style="left:986.8959375000003px;top:254.5px;width:7.274062499999999px;height:10px;background:#fff;"></div><div class="b" style="left:990.8566718750003px;top:248px;width:3.23703125px;height:16.5px;background:#fff;"></div><div class="t" style="left:1027px;top:249.24px;font-size:12px;line-height:14px;color:#111;width:90.8px;text-align:right;">0</div><div class="t" style="left:1124.7px;top:249.24px;font-size:12px;line-height:14px;color:#111;transform:scaleX(1.0215);transform-origin:0 0;">Kilogramme</div><div class="t" style="left:636.2px;top:269.24px;font-size:12px;line-height:14px;color:#111;transform:scaleX(0.9292);transform-origin:0 0;">FILM</div><div class="t" style="left:836.8px;top:269.24px;font-size:12px;line-height:14px;color:#111;width:90.8px;text-align:right;letter-spacing:-0.2px;">2718,071</div><div class="b" style="left:920.9259375px;top:274.5px;width:7.274062499999999px;height:10px;background:#fff;"></div><div class="b" style="left:924.886671875px;top:268px;width:3.23703125px;height:16.5px;background:#fff;"></div><div class="b" style="left:914.4518750000001px;top:268px;width:7.274062499999999px;height:10.2px;background:#fff;"></div><div class="b" style="left:911.6148437500001px;top:268px;width:3.6370312499999997px;height:16.5px;background:#fff;"></div><div class="b" style="left:898.3700000000002px;top:268px;width:7.274062499999999px;height:8.6px;background:#fff;"></div><div class="b" style="left:891.8959375000003px;top:268px;width:7.274062499999999px;height:10.2px;background:#fff;"></div><div class="b" style="left:885.4218750000003px;top:275.6px;width:7.274062499999999px;height:9px;background:#fff;"></div><div class="t" style="left:931.8px;top:269.24px;font-size:12px;line-height:14px;color:#111;width:90.8px;text-align:right;letter-spacing:-0.2px;">2773,004</div><div class="b" style="left:1009.4518750000001px;top:268px;width:7.274062499999999px;height:8.6px;background:#fff;"></div><div class="b" style="left:1006.6148437500001px;top:268px;width:3.6370312499999997px;height:16.5px;background:#fff;"></div><div class="b" style="left:986.8959375000003px;top:275.6px;width:7.274062499999999px;height:9px;background:#fff;"></div><div class="b" style="left:980.4218750000003px;top:273.4px;width:7.274062499999999px;height:11px;background:#fff;"></div><div class="b" style="left:973.9478125000004px;top:274.5px;width:7.274062499999999px;height:10px;background:#fff;"></div><div class="b" style="left:977.9085468750004px;top:268px;width:3.23703125px;height:16.5px;background:#fff;"></div><div class="t" style="left:1027px;top:269.24px;font-size:12px;line-height:14px;color:#111;width:90.8px;text-align:right;">0</div><div class="t" style="left:1124.7px;top:269.24px;font-size:12px;line-height:14px;color:#111;transform:scaleX(1.0215);transform-origin:0 0;">Kilogramme</div><div class="t" style="left:636.2px;top:289.24px;font-size:12px;line-height:14px;color:#111;transform:scaleX(0.9203);transform-origin:0 0;">AROME</div><div class="t" style="left:836.8px;top:289.24px;font-size:12px;line-height:14px;color:#111;width:90.8px;text-align:right;letter-spacing:-0.2px;">14,300</div><div class="b" style="left:920.9259375px;top:288px;width:3.6370312499999997px;height:16.5px;background:#fff;"></div><div class="b" style="left:914.4518750000001px;top:288px;width:7.274062499999999px;height:10.2px;background:#fff;"></div><div class="b" style="left:904.8440625000002px;top:288px;width:3.93375px;height:16.5px;background:#fff;"></div><div class="b" style="left:898.3700000000002px;top:295.6px;width:7.274062499999999px;height:9px;background:#fff;"></div><div class="t" style="left:931.8px;top:289.24px;font-size:12px;line-height:14px;color:#111;width:90.8px;text-align:right;letter-spacing:-0.2px;">14,650</div><div class="b" style="left:1009.4518750000001px;top:288px;width:7.274062499999999px;height:8.6px;background:#fff;"></div><div class="b" style="left:1002.9778125000001px;top:294.5px;width:7.274062499999999px;height:10px;background:#fff;"></div><div class="b" style="left:1006.9385468750002px;top:288px;width:3.23703125px;height:16.5px;background:#fff;"></div><div class="b" style="left:999.8440625000002px;top:288px;width:3.93375px;height:10.2px;background:#fff;"></div><div class="b" style="left:993.3700000000002px;top:288px;width:7.274062499999999px;height:16.5px;background:#fff;"></div><div class="b" style="left:986.8959375000003px;top:293.4px;width:7.274062499999999px;height:11px;background:#fff;"></div><div class="t" style="left:1027px;top:289.24px;font-size:12px;line-height:14px;color:#111;width:90.8px;text-align:right;">0</div><div class="t" style="left:1124.7px;top:289.24px;font-size:12px;line-height:14px;color:#111;transform:scaleX(1.0215);transform-origin:0 0;">Kilogramme</div><div class="t" style="left:636.2px;top:309.24px;font-size:12px;line-height:14px;color:#111;transform:scaleX(0.9035);transform-origin:0 0;">BEZOATE</div><div class="t" style="left:836.8px;top:309.24px;font-size:12px;line-height:14px;color:#111;width:90.8px;text-align:right;letter-spacing:-0.2px;">11,870</div><div class="b" style="left:914.4518750000001px;top:313.4px;width:7.274062499999999px;height:11px;background:#fff;"></div><div class="b" style="left:911.6148437500001px;top:308px;width:3.6370312499999997px;height:16.5px;background:#fff;"></div><div class="b" style="left:898.3700000000002px;top:314.5px;width:7.274062499999999px;height:10px;background:#fff;"></div><div class="b" style="left:902.3307343750002px;top:308px;width:3.23703125px;height:16.5px;background:#fff;"></div><div class="t" style="left:931.8px;top:309.24px;font-size:12px;line-height:14px;color:#111;width:90.8px;text-align:right;letter-spacing:-0.2px;">11,800</div><div class="b" style="left:1019.56296875px;top:308px;width:3.6370312499999997px;height:16.5px;background:#fff;"></div><div class="b" style="left:1009.4518750000001px;top:308px;width:7.274062499999999px;height:10.2px;background:#fff;"></div><div class="b" style="left:1006.6148437500001px;top:308px;width:3.6370312499999997px;height:16.5px;background:#fff;"></div><div class="b" style="left:993.3700000000002px;top:314.5px;width:7.274062499999999px;height:10px;background:#fff;"></div><div class="b" style="left:997.3307343750002px;top:308px;width:3.23703125px;height:16.5px;background:#fff;"></div><div class="t" style="left:1027px;top:309.24px;font-size:12px;line-height:14px;color:#111;width:90.8px;text-align:right;">0</div><div class="t" style="left:1124.7px;top:309.24px;font-size:12px;line-height:14px;color:#111;transform:scaleX(1.0215);transform-origin:0 0;">Kilogramme</div><div class="t" style="left:636.2px;top:329.24px;font-size:12px;line-height:14px;color:#111;transform:scaleX(0.8821);transform-origin:0 0;">SORBATE</div><div class="t" style="left:836.8px;top:329.24px;font-size:12px;line-height:14px;color:#111;width:90.8px;text-align:right;letter-spacing:-0.2px;">3,002</div><div class="b" style="left:914.4518750000001px;top:328px;width:7.274062499999999px;height:10.2px;background:#fff;"></div><div class="b" style="left:907.9778125000001px;top:328px;width:7.274062499999999px;height:10.2px;background:#fff;"></div><div class="b" style="left:898.3700000000002px;top:334.5px;width:7.274062499999999px;height:10px;background:#fff;"></div><div class="b" style="left:902.3307343750002px;top:328px;width:3.23703125px;height:16.5px;background:#fff;"></div><div class="t" style="left:931.8px;top:329.24px;font-size:12px;line-height:14px;color:#111;width:90.8px;text-align:right;letter-spacing:-0.2px;">3,072</div><div class="b" style="left:1015.9259375px;top:328px;width:7.274062499999999px;height:10.2px;background:#fff;"></div><div class="b" style="left:1009.4518750000001px;top:333.4px;width:7.274062499999999px;height:11px;background:#fff;"></div><div class="b" style="left:1002.9778125000001px;top:328px;width:7.274062499999999px;height:10.2px;background:#fff;"></div><div class="b" style="left:999.8440625000002px;top:328px;width:3.93375px;height:10.2px;background:#fff;"></div><div class="b" style="left:993.3700000000002px;top:328px;width:7.274062499999999px;height:16.5px;background:#fff;"></div><div class="t" style="left:1027px;top:329.24px;font-size:12px;line-height:14px;color:#111;width:90.8px;text-align:right;">0</div><div class="t" style="left:1124.7px;top:329.24px;font-size:12px;line-height:14px;color:#111;transform:scaleX(1.0215);transform-origin:0 0;">Kilogramme</div><div class="t" style="left:636.2px;top:349.24px;font-size:12px;line-height:14px;color:#111;transform:scaleX(0.9463);transform-origin:0 0;">AROME POMME</div><div class="t" style="left:836.8px;top:349.24px;font-size:12px;line-height:14px;color:#111;width:90.8px;text-align:right;letter-spacing:-0.2px;">11,550</div><div class="b" style="left:914.4518750000001px;top:348px;width:7.274062499999999px;height:8.6px;background:#fff;"></div><div class="b" style="left:907.9778125000001px;top:348px;width:7.274062499999999px;height:10.2px;background:#fff;"></div><div class="b" style="left:898.3700000000002px;top:348px;width:7.274062499999999px;height:10.2px;background:#fff;"></div><div class="b" style="left:891.8959375000003px;top:348px;width:7.274062499999999px;height:9.5px;background:#fff;"></div><div class="b" style="left:891.8959375000003px;top:348px;width:3.560734375px;height:16.5px;background:#fff;"></div><div class="t" style="left:931.8px;top:349.24px;font-size:12px;line-height:14px;color:#111;width:90.8px;text-align:right;letter-spacing:-0.2px;">11,570</div><div class="b" style="left:1015.9259375px;top:348px;width:3.6370312499999997px;height:16.5px;background:#fff;"></div><div class="b" style="left:1009.4518750000001px;top:353.4px;width:7.274062499999999px;height:11px;background:#fff;"></div><div class="b" style="left:1002.9778125000001px;top:348px;width:7.274062499999999px;height:10.2px;background:#fff;"></div><div class="b" style="left:993.3700000000002px;top:348px;width:7.274062499999999px;height:9.5px;background:#fff;"></div><div class="b" style="left:993.3700000000002px;top:348px;width:3.560734375px;height:16.5px;background:#fff;"></div><div class="b" style="left:986.8959375000003px;top:353.4px;width:7.274062499999999px;height:11px;background:#fff;"></div><div class="t" style="left:1027px;top:349.24px;font-size:12px;line-height:14px;color:#111;width:90.8px;text-align:right;">0</div><div class="t" style="left:1124.7px;top:349.24px;font-size:12px;line-height:14px;color:#111;transform:scaleX(1.0215);transform-origin:0 0;">Kilogramme</div><div class="t" style="left:636.2px;top:369.24px;font-size:12px;line-height:14px;color:#111;transform:scaleX(0.919);transform-origin:0 0;">EMULSION</div><div class="t" style="left:836.8px;top:369.24px;font-size:12px;line-height:14px;color:#111;width:90.8px;text-align:right;letter-spacing:-0.2px;">14,550</div><div class="b" style="left:924.56296875px;top:368px;width:3.6370312499999997px;height:16.5px;background:#fff;"></div><div class="b" style="left:914.4518750000001px;top:368px;width:7.274062499999999px;height:10.2px;background:#fff;"></div><div class="b" style="left:907.9778125000001px;top:368px;width:7.274062499999999px;height:10.2px;background:#fff;"></div><div class="t" style="left:931.8px;top:369.24px;font-size:12px;line-height:14px;color:#111;width:90.8px;text-align:right;letter-spacing:-0.2px;">14,570</div><div class="b" style="left:1015.9259375px;top:374.5px;width:7.274062499999999px;height:10px;background:#fff;"></div><div class="b" style="left:1019.886671875px;top:368px;width:3.23703125px;height:16.5px;background:#fff;"></div><div class="b" style="left:1009.4518750000001px;top:368px;width:7.274062499999999px;height:10.2px;background:#fff;"></div><div class="b" style="left:1002.9778125000001px;top:368px;width:7.274062499999999px;height:10.2px;background:#fff;"></div><div class="b" style="left:999.8440625000002px;top:368px;width:3.93375px;height:10.2px;background:#fff;"></div><div class="b" style="left:986.8959375000003px;top:373.4px;width:7.274062499999999px;height:11px;background:#fff;"></div><div class="t" style="left:1027px;top:369.24px;font-size:12px;line-height:14px;color:#111;width:90.8px;text-align:right;">0</div><div class="t" style="left:1124.7px;top:369.24px;font-size:12px;line-height:14px;color:#111;transform:scaleX(1.0215);transform-origin:0 0;">Kilogramme</div><div class="t" style="left:636.2px;top:389.24px;font-size:12px;line-height:14px;color:#111;transform:scaleX(0.8237);transform-origin:0 0;">SUCRE</div><div class="t" style="left:836.8px;top:389.24px;font-size:12px;line-height:14px;color:#111;width:90.8px;text-align:right;letter-spacing:-0.2px;">11055,752</div><div class="b" style="left:914.4518750000001px;top:388px;width:7.274062499999999px;height:8.6px;background:#fff;"></div><div class="b" style="left:907.9778125000001px;top:395.6px;width:7.274062499999999px;height:9px;background:#fff;"></div><div class="b" style="left:904.8440625000002px;top:388px;width:3.93375px;height:9.5px;background:#fff;"></div><div class="b" style="left:904.8440625000002px;top:388px;width:1.7235625px;height:16.5px;background:#fff;"></div><div class="b" style="left:898.3700000000002px;top:388px;width:7.274062499999999px;height:10.2px;background:#fff;"></div><div class="b" style="left:891.8959375000003px;top:388px;width:7.274062499999999px;height:10.2px;background:#fff;"></div><div class="b" style="left:885.4218750000003px;top:388px;width:7.274062499999999px;height:10.2px;background:#fff;"></div><div class="b" style="left:878.9478125000004px;top:388px;width:7.274062499999999px;height:16.5px;background:#fff;"></div><div class="t" style="left:931.8px;top:389.24px;font-size:12px;line-height:14px;color:#111;width:90.8px;text-align:right;letter-spacing:-0.2px;">11755,752</div><div class="b" style="left:1009.4518750000001px;top:388px;width:7.274062499999999px;height:8.6px;background:#fff;"></div><div class="b" style="left:1002.9778125000001px;top:395.6px;width:7.274062499999999px;height:9px;background:#fff;"></div><div class="b" style="left:999.8440625000002px;top:388px;width:3.93375px;height:9.5px;background:#fff;"></div><div class="b" style="left:999.8440625000002px;top:388px;width:1.7235625px;height:16.5px;background:#fff;"></div><div class="b" style="left:993.3700000000002px;top:388px;width:7.274062499999999px;height:10.2px;background:#fff;"></div><div class="b" style="left:990.5329687500002px;top:388px;width:3.6370312499999997px;height:16.5px;background:#fff;"></div><div class="b" style="left:980.4218750000003px;top:394.5px;width:7.274062499999999px;height:10px;background:#fff;"></div><div class="b" style="left:984.3826093750004px;top:388px;width:3.23703125px;height:16.5px;background:#fff;"></div><div class="b" style="left:973.9478125000004px;top:393.4px;width:7.274062499999999px;height:11px;background:#fff;"></div><div class="b" style="left:967.4737500000005px;top:388px;width:7.274062499999999px;height:10.2px;background:#fff;"></div><div class="t" style="left:1027px;top:389.24px;font-size:12px;line-height:14px;color:#111;width:90.8px;text-align:right;">0</div><div class="t" style="left:1124.7px;top:389.24px;font-size:12px;line-height:14px;color:#111;transform:scaleX(1.0215);transform-origin:0 0;">Kilogramme</div><div class="t" style="left:636.2px;top:409.24px;font-size:12px;line-height:14px;color:#111;transform:scaleX(0.9203);transform-origin:0 0;">AROME</div><div class="t" style="left:836.8px;top:409.24px;font-size:12px;line-height:14px;color:#111;width:90.8px;text-align:right;letter-spacing:-0.2px;">10,104</div><div class="b" style="left:907.9778125000001px;top:414.5px;width:7.274062499999999px;height:10px;background:#fff;"></div><div class="b" style="left:911.9385468750002px;top:408px;width:3.23703125px;height:16.5px;background:#fff;"></div><div class="b" style="left:904.8440625000002px;top:408px;width:3.93375px;height:16.5px;background:#fff;"></div><div class="b" style="left:898.3700000000002px;top:415.6px;width:7.274062499999999px;height:9px;background:#fff;"></div><div class="t" style="left:931.8px;top:409.24px;font-size:12px;line-height:14px;color:#111;width:90.8px;text-align:right;letter-spacing:-0.2px;">10,104</div><div class="b" style="left:1015.9259375px;top:408px;width:3.6370312499999997px;height:16.5px;background:#fff;"></div><div class="b" style="left:1009.4518750000001px;top:408px;width:7.274062499999999px;height:10.2px;background:#fff;"></div><div class="b" style="left:1002.9778125000001px;top:413.4px;width:7.274062499999999px;height:11px;background:#fff;"></div><div class="b" style="left:999.8440625000002px;top:408px;width:3.93375px;height:10.2px;background:#fff;"></div><div class="b" style="left:993.3700000000002px;top:414.5px;width:7.274062499999999px;height:10px;background:#fff;"></div><div class="b" style="left:997.3307343750002px;top:408px;width:3.23703125px;height:16.5px;background:#fff;"></div><div class="b" style="left:986.8959375000003px;top:413.4px;width:7.274062499999999px;height:11px;background:#fff;"></div><div class="t" style="left:1027px;top:409.24px;font-size:12px;line-height:14px;color:#111;width:90.8px;text-align:right;">0</div><div class="t" style="left:1124.7px;top:409.24px;font-size:12px;line-height:14px;color:#111;transform:scaleX(1.0215);transform-origin:0 0;">Kilogramme</div><div class="b" style="left:633px;top:425px;width:204px;height:21px;background:#02fdfd;"></div><svg style="left:623.7px;top:430.9px" width="7" height="12" viewBox="0 0 7 12"><path d="M0 0L6.2 5.5L0 11Z" fill="#000"/></svg><div class="t" style="left:636.2px;top:429.24px;font-size:12px;line-height:14px;color:#111;transform:scaleX(0.919);transform-origin:0 0;">EMULSION</div><div class="t" style="left:836.8px;top:429.24px;font-size:12px;line-height:14px;color:#111;width:90.8px;text-align:right;letter-spacing:-0.2px;">11,750</div><div class="b" style="left:914.4518750000001px;top:428px;width:7.274062499999999px;height:8.6px;background:#fff;"></div><div class="b" style="left:907.9778125000001px;top:435.6px;width:7.274062499999999px;height:9px;background:#fff;"></div><div class="b" style="left:898.3700000000002px;top:428px;width:7.274062499999999px;height:10.2px;background:#fff;"></div><div class="b" style="left:891.8959375000003px;top:434.5px;width:7.274062499999999px;height:10px;background:#fff;"></div><div class="b" style="left:895.8566718750003px;top:428px;width:3.23703125px;height:16.5px;background:#fff;"></div><div class="t" style="left:931.8px;top:429.24px;font-size:12px;line-height:14px;color:#111;width:90.8px;text-align:right;letter-spacing:-0.2px;">11,770</div><div class="b" style="left:1015.9259375px;top:428px;width:7.274062499999999px;height:10.2px;background:#fff;"></div><div class="b" style="left:1009.4518750000001px;top:433.4px;width:7.274062499999999px;height:11px;background:#fff;"></div><div class="b" style="left:1002.9778125000001px;top:428px;width:7.274062499999999px;height:10.2px;background:#fff;"></div><div class="b" style="left:993.3700000000002px;top:434.5px;width:7.274062499999999px;height:10px;background:#fff;"></div><div class="b" style="left:997.3307343750002px;top:428px;width:3.23703125px;height:16.5px;background:#fff;"></div><div class="b" style="left:986.8959375000003px;top:433.4px;width:7.274062499999999px;height:11px;background:#fff;"></div><div class="t" style="left:1027px;top:429.24px;font-size:12px;line-height:14px;color:#111;width:90.8px;text-align:right;">0</div><div class="t" style="left:1124.7px;top:429.24px;font-size:12px;line-height:14px;color:#111;transform:scaleX(1.0215);transform-origin:0 0;">Kilogramme</div>
<div class="b" style="left:1342px;top:185px;width:17px;height:467px;background:linear-gradient(90deg,#e6e6e6 0%,#f1f1f1 35%,#f4f4f4 100%);"></div><svg style="left:1348px;top:192.2px" width="8" height="5" viewBox="0 0 8 5"><path d="M0 3.7H6.8L3.4 0Z" fill="#5a5a5a"/></svg><svg style="left:1348px;top:642.2px" width="8" height="5" viewBox="0 0 8 5"><path d="M0 0H6.8L3.4 3.7Z" fill="#484848"/></svg><div class="b" style="left:1343px;top:410px;width:15px;height:223.5px;border:1px solid #979797;border-radius:2px;background:linear-gradient(90deg,#f6f6f6 0%,#ededed 45%,#dadada 55%,#c9c9cb 100%);box-shadow:inset 0 0 0 1px rgba(255,255,255,.75);"></div><div class="b" style="left:1347px;top:518.4499999999999px;width:6.8px;height:1.3px;background:linear-gradient(90deg,#2e2e2e,#6a6a6a 55%,#b8b8b8);"></div><div class="b" style="left:1347px;top:519.75px;width:6.8px;height:1px;background:rgba(255,255,255,.8);"></div><div class="b" style="left:1347px;top:521.4499999999999px;width:6.8px;height:1.3px;background:linear-gradient(90deg,#2e2e2e,#6a6a6a 55%,#b8b8b8);"></div><div class="b" style="left:1347px;top:522.75px;width:6.8px;height:1px;background:rgba(255,255,255,.8);"></div><div class="b" style="left:1347px;top:524.4499999999999px;width:6.8px;height:1.3px;background:linear-gradient(90deg,#2e2e2e,#6a6a6a 55%,#b8b8b8);"></div><div class="b" style="left:1347px;top:525.75px;width:6.8px;height:1px;background:rgba(255,255,255,.8);"></div>
<div class="b" style="left:745.4px;top:499.4px;width:1.6px;height:1.6px;background:#333;border-radius:1px;"></div>
<div class="btn" style="left:621px;top:653px;width:367px;height:23px"></div><div class="btnd" style="left:991px;top:653px;width:367px;height:23px"></div><svg style="left:798px;top:657px" width="15" height="14" viewBox="0 0 15 14"><path d="M1.1 0V14" stroke="#1e6b22" stroke-width="2"/><path d="M13 1.7V12.3L3.9 7Z" fill="#6cc44e" stroke="#2d862b" stroke-width="1.1" stroke-linejoin="miter"/></svg><svg style="left:1166.5px;top:657px" width="15" height="14" viewBox="0 0 15 14"><path d="M13 0V14" stroke="#585858" stroke-width="2"/><path d="M0.9 1.7V12.3L11.4 7Z" fill="#b4b4b4" stroke="#6e6e6e" stroke-width="1.1"/></svg>
</body></html>
